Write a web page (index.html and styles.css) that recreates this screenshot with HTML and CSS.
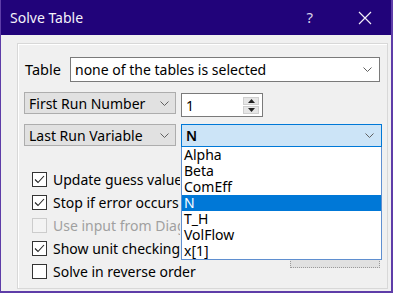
FILE: index.html
```html
<!doctype html>
<html lang="en">
<head>
  <meta charset="utf-8">
  <title>Solve Table</title>
  <link rel="stylesheet" href="styles.css">
</head>
<body>

<div class="window">
  <div class="titlebar">
    <span class="title">Solve Table</span>
    <span class="help">?</span>
    <svg class="close" width="14" height="14" viewBox="0 0 14 14">
      <path d="M1 1 L13 13 M13 1 L1 13" stroke="#f2eef8" stroke-width="1.2" fill="none"/>
    </svg>
  </div>

  <div class="body">
    <div class="group">
      <div class="row row-table">
        <label class="lbl">Table</label>
        <div class="select select-table">
          <span>none of the tables is selected</span>
          <svg class="chev" width="9" height="5" viewBox="0 0 9 5"><path d="M0.5 0.5 L4.5 4.5 L8.5 0.5" stroke="#606060" fill="none"/></svg>
        </div>
      </div>

      <div class="row row-first">
        <div class="drop">
          <span>First Run Number</span>
          <svg class="chev" width="9" height="5" viewBox="0 0 9 5"><path d="M0.5 0.5 L4.5 4.5 L8.5 0.5" stroke="#606060" fill="none"/></svg>
        </div>
        <div class="spin">
          <span>1</span>
          <div class="spin-btns">
            <div class="spin-btn"><svg width="7" height="4" viewBox="0 0 7 4"><path d="M0 4 L3.5 0 L7 4 Z" fill="#222"/></svg></div>
            <div class="spin-btn"><svg width="7" height="4" viewBox="0 0 7 4"><path d="M0 0 L3.5 4 L7 0 Z" fill="#222"/></svg></div>
          </div>
        </div>
      </div>

      <div class="row row-last">
        <div class="drop">
          <span>Last Run Variable</span>
          <svg class="chev" width="9" height="5" viewBox="0 0 9 5"><path d="M0.5 0.5 L4.5 4.5 L8.5 0.5" stroke="#606060" fill="none"/></svg>
        </div>
        <div class="combo-wrap">
          <div class="combo">
            <span>N</span>
            <svg class="chev" width="9" height="5" viewBox="0 0 9 5"><path d="M0.5 0.5 L4.5 4.5 L8.5 0.5" stroke="#606060" fill="none"/></svg>
          </div>
          <ul class="list">
            <li>Alpha</li>
            <li>Beta</li>
            <li>ComEff</li>
            <li class="sel">N</li>
            <li>T_H</li>
            <li>VolFlow</li>
            <li>x[1]</li>
          </ul>
        </div>
      </div>

      <div class="lower">
        <div class="checks">
          <div class="check"><span class="box on"><svg width="13" height="13" viewBox="0 0 13 13"><path d="M2 6.5 L5 9.5 L11 3" stroke="#222" stroke-width="1.1" fill="none"/></svg></span><span class="txt">Update guess values</span></div>
          <div class="check"><span class="box on"><svg width="13" height="13" viewBox="0 0 13 13"><path d="M2 6.5 L5 9.5 L11 3" stroke="#222" stroke-width="1.1" fill="none"/></svg></span><span class="txt">Stop if error occurs</span></div>
          <div class="check disabled"><span class="box"></span><span class="txt">Use input from Diagram</span></div>
          <div class="check"><span class="box on"><svg width="13" height="13" viewBox="0 0 13 13"><path d="M2 6.5 L5 9.5 L11 3" stroke="#222" stroke-width="1.1" fill="none"/></svg></span><span class="txt">Show unit checking warnings</span></div>
          <div class="check"><span class="box"></span><span class="txt full">Solve in reverse order</span></div>
        </div>
        <div class="side">
          <div class="btn"></div>
        </div>
      </div>
    </div>
  </div>
</div>

</body>
</html>
```

FILE: styles.css
```css
:root {
  --frame: #5e3da8;
  --title-bg: #21037a;
  --face: #f0f0f0;
  --ctl-border: #7a7a7a;
  --btn-face: #e1e1e1;
  --btn-border: #adadad;
  --accent: #0078d7;
}
html,
body {
  margin: 0;
  background: var(--face);
}
* {
  box-sizing: border-box;
}
.window {
  width: 393px;
  height: 293px;
  display: flex;
  flex-direction: column;
  border-left: 1px solid var(--frame);
  border-right: 2px solid var(--frame);
  border-bottom: 2px solid var(--frame);
  font-family: "Noto Sans", "Open Sans", sans-serif;
  font-size: 14px;
  color: #000;
  overflow: hidden;
}
.titlebar {
  height: 35px;
  flex: none;
  display: flex;
  align-items: center;
  background: var(--title-bg);
  color: #f4f2f9;
  padding-left: 9px;
}
.title {
  font-size: 14px;
  flex: 1;
}
.help {
  font-size: 15px;
  color: #d9d4e8;
  margin-right: 45px;
  margin-top: -1px;
}
.close {
  margin-right: 19px;
}
.body {
  flex: 1;
  padding: 8px 3px 2px 16px;
  display: flex;
}
.group {
  flex: 1;
  border: 1px solid #d8d8d8;
  box-shadow: inset 1px 1px 0 #fff;
  padding: 13px 0 0 6px;
  display: flex;
  flex-direction: column;
  position: relative;
}
.row {
  display: flex;
  align-items: flex-start;
}
.lbl {
  width: 46px;
  padding-left: 1px;
  line-height: 25px;
  font-size: 14.5px;
}
.select,
.drop,
.combo,
.spin {
  display: flex;
  align-items: center;
  white-space: nowrap;
}
.select {
  width: 310px;
  height: 25px;
  background: #fff;
  border: 1px solid var(--ctl-border);
  padding: 0 7px 0 4px;
  justify-content: space-between;
}
.row-first {
  margin-top: 10px;
}
.row-last {
  margin-top: 7px;
}
.drop {
  width: 152px;
  height: 22px;
  background: var(--btn-face);
  border: 1px solid var(--btn-border);
  padding: 0 6px 0 4px;
  justify-content: space-between;
}
.spin {
  width: 82px;
  height: 24px;
  margin: 1px 0 0 5px;
  background: #fff;
  border: 1px solid var(--ctl-border);
  padding: 0 3px 0 4px;
  justify-content: space-between;
}
.spin-btns {
  display: flex;
  flex-direction: column;
  gap: 1px;
}
.spin-btn {
  width: 16px;
  height: 8px;
  background: #e6e6e6;
  border: 1px solid #cfcfcf;
  display: flex;
  align-items: center;
  justify-content: center;
}
.combo-wrap {
  position: relative;
  margin-left: 5px;
}
.combo {
  width: 201px;
  height: 23px;
  background: #cce4f7;
  border: 1px solid var(--accent);
  padding: 0 7px 0 4px;
  justify-content: space-between;
  font-weight: 600;
}
.list {
  position: absolute;
  left: 0;
  top: 23px;
  width: 201px;
  margin: 0;
  padding: 0;
  list-style: none;
  background: #fff;
  border: 1px solid #5f8fd0;
  border-top: none;
  z-index: 2;
}
.list li {
  height: 16px;
  line-height: 16px;
  padding-left: 2px;
}
.list li.sel {
  background: var(--accent);
  color: #fff;
}
.lower {
  display: flex;
  margin-top: 21px;
  flex: 1;
}
.checks {
  flex: 1;
  padding-left: 8px;
}
.check {
  height: 23px;
  display: flex;
  align-items: center;
  gap: 6px;
  white-space: nowrap;
}
.txt {
  max-width: 127px;
  overflow: hidden;
}
.txt.full {
  max-width: none;
}
.box {
  width: 15px;
  height: 15px;
  flex: none;
  border: 1px solid #333;
  background: #fff;
  display: flex;
  align-items: center;
  justify-content: center;
}
.check.disabled {
  color: #a0a0a0;
}
.check.disabled .box {
  border-color: #cccccc;
  background: #f3f3f3;
}
.side {
  display: flex;
  align-items: flex-end;
  padding: 0 7px 20px 0;
}
.btn {
  width: 90px;
  height: 24px;
  background: var(--btn-face);
  border: 1px dotted #9a9a9a;
}
```
